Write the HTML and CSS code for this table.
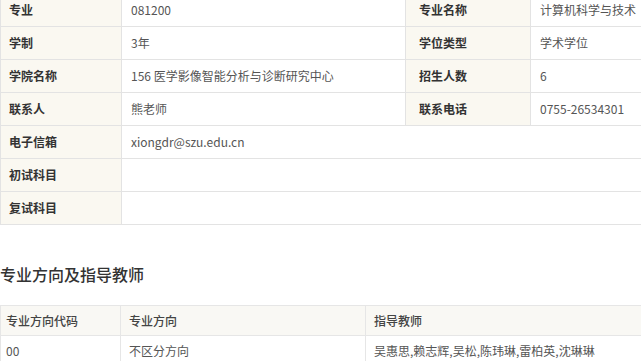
FILE: index.html
```html
<!DOCTYPE html>
<html lang="zh-CN">
<head>
<meta charset="utf-8">
<title>专业信息</title>
<link rel="stylesheet" href="styles.css">
</head>
<body>
<div class="page">
  <table class="info">
    <colgroup>
      <col class="c1"><col class="c2"><col class="c3"><col class="c4">
    </colgroup>
    <tr>
      <th>专业</th><td>081200</td>
      <th class="lab2">专业名称</th><td class="val2">计算机科学与技术</td>
    </tr>
    <tr>
      <th>学制</th><td>3年</td>
      <th class="lab2">学位类型</th><td class="val2">学术学位</td>
    </tr>
    <tr>
      <th>学院名称</th><td>156 医学影像智能分析与诊断研究中心</td>
      <th class="lab2">招生人数</th><td class="val2">6</td>
    </tr>
    <tr>
      <th>联系人</th><td>熊老师</td>
      <th class="lab2">联系电话</th><td class="val2">0755-26534301</td>
    </tr>
    <tr>
      <th>电子信箱</th><td colspan="3">xiongdr@szu.edu.cn</td>
    </tr>
    <tr>
      <th>初试科目</th><td colspan="3"></td>
    </tr>
    <tr>
      <th>复试科目</th><td colspan="3"></td>
    </tr>
  </table>

  <h2 class="section-title">专业方向及指导教师</h2>

  <table class="dirs">
    <colgroup>
      <col class="d1"><col class="d2"><col class="d3">
    </colgroup>
    <tr class="head">
      <th class="first">专业方向代码</th><th>专业方向</th><th>指导教师</th>
    </tr>
    <tr>
      <td class="first">00</td><td>不区分方向</td><td>吴惠思,赖志辉,吴松,陈玮琳,雷柏英,沈琳琳</td>
    </tr>
  </table>
</div>
</body>
</html>
```

FILE: styles.css
```css
html, body {
  margin: 0;
  padding: 0;
  background: #ffffff;
  overflow: hidden;
}

body {
  font-family: "Noto Sans CJK SC", "Noto Sans", sans-serif;
  font-size: 12px;
  color: #555555;
}

.page {
  width: 641px;
  height: 361px;
  overflow: hidden;
}

table {
  border-collapse: collapse;
  table-layout: fixed;
}

.info {
  width: 680px;
  margin-top: -6px;
}

.info .c1 { width: 121px; }
.info .c2 { width: 284px; }
.info .c3 { width: 125px; }
.info .c4 { width: 150px; }

.info th,
.info td {
  height: 32px;
  padding: 0 0 0 9px;
  border: 1px solid #e3e3e3;
  text-align: left;
  vertical-align: middle;
  line-height: 16px;
  white-space: nowrap;
}

.info tr:first-child th,
.info tr:first-child td {
  border-top: none;
}

.info th {
  background: #faf8f1;
  color: #333333;
  font-weight: bold;
  padding-left: 8px;
}

.info th.lab2 {
  padding-left: 13px;
}

.info td.val2 {
  padding-left: 9px;
}

.info td {
  color: #555555;
}

.section-title {
  margin: 37px 0 0 0;
  height: 24px;
  font-size: 16px;
  line-height: 24px;
  font-weight: 500;
  color: #333333;
}

.dirs {
  width: 680px;
  margin-top: 19px;
}

.dirs .d1 { width: 120px; }
.dirs .d2 { width: 245px; }
.dirs .d3 { width: 315px; }

.dirs th,
.dirs td {
  height: 29px;
  padding: 0 0 0 8px;
  border: 1px solid #e6e6e6;
  text-align: left;
  vertical-align: middle;
  line-height: 16px;
  white-space: nowrap;
}

.dirs .first {
  padding-left: 5px;
}

.dirs .head th {
  background: #f9f8f4;
  color: #444444;
  font-weight: 500;
}

.dirs td {
  color: #555555;
  background: #ffffff;
}
```
